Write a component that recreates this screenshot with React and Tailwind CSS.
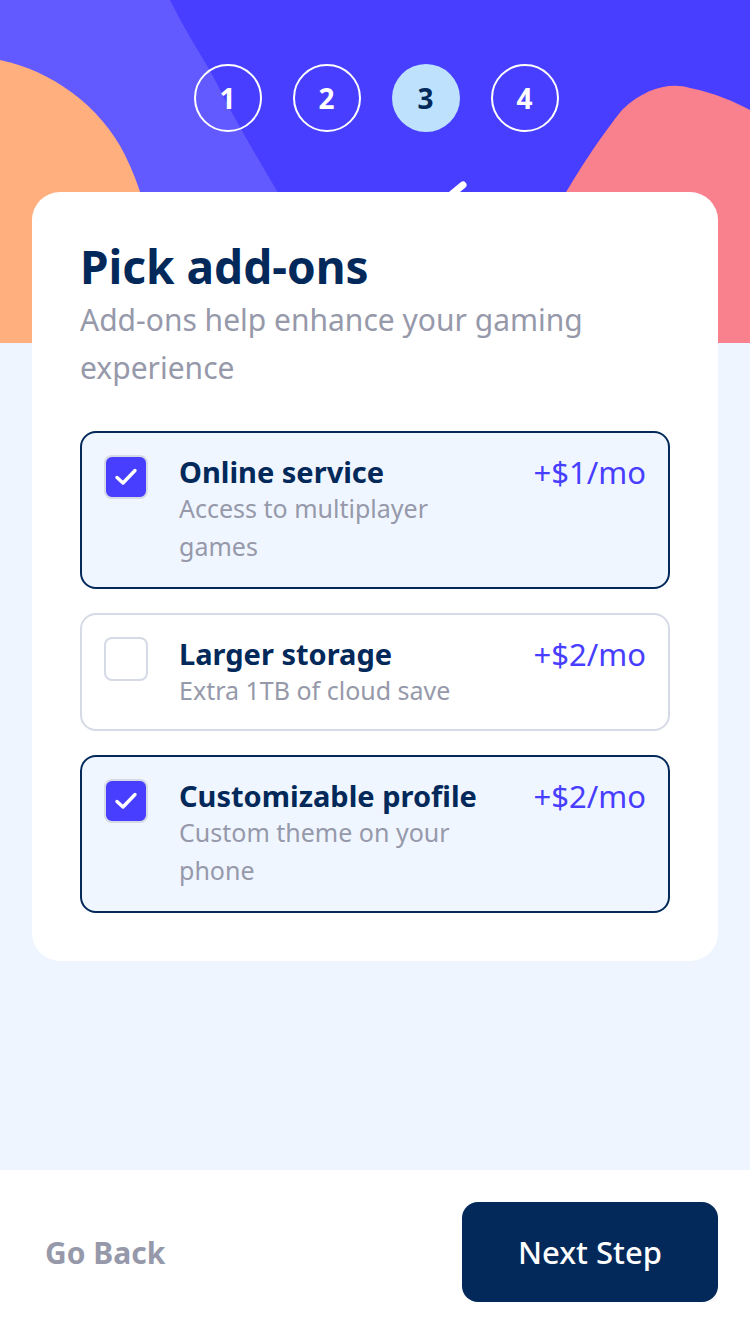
import React from "react";

const steps = [1, 2, 3, 4];

const addons = [
  { title: "Online service", desc: ["Access to multiplayer", "games"], price: "+$1/mo", checked: true },
  { title: "Larger storage", desc: ["Extra 1TB of cloud save"], price: "+$2/mo", checked: false },
  { title: "Customizable profile", desc: ["Custom theme on your", "phone"], price: "+$2/mo", checked: true },
];

function Check() {
  return (
    <svg width="24" height="20" viewBox="0 0 24 20" fill="none">
      <path d="M3 10.5 L9 16 L21 3.5" stroke="white" strokeWidth="3.4" strokeLinecap="round" strokeLinejoin="round" />
    </svg>
  );
}

function HeroBg() {
  return (
    <svg className="absolute inset-0" width="750" height="343" viewBox="0 0 750 343" preserveAspectRatio="none">
      <rect width="750" height="343" fill="#483EFF" />
      <path d="M0 0 L170 0 C190 40 205 60 215 80 C240 130 262 165 300 230 L330 343 L0 343 Z" fill="#6259FF" />
      <path d="M0 60 C50 70 100 105 125 155 C150 205 160 270 170 343 L0 343 Z" fill="#FFAF7E" />
      <path d="M540 240 C560 200 590 150 622 110 C645 88 670 82 690 88 C715 93 735 102 750 110 L750 343 L540 343 Z" fill="#F9818E" />
      <path d="M452 194 L463 185" stroke="white" strokeWidth="7" strokeLinecap="round" />
    </svg>
  );
}

export default function App() {
  return (
    <div className="w-[750px] h-[1334px] flex flex-col bg-[#EFF5FF] overflow-hidden" style={{ fontFamily: "'Noto Sans', sans-serif" }}>
      <div className="relative h-[343px] shrink-0">
        <HeroBg />
        <div className="relative flex justify-center gap-[31px] pt-[64px] pl-[2px]">
          {steps.map((s) => (
            <div
              key={s}
              className={
                s === 3
                  ? "w-[68px] h-[68px] rounded-full bg-[#BEE2FD] text-[#02295A] flex items-center justify-center text-[28px] font-bold"
                  : "w-[68px] h-[68px] rounded-full border-2 border-white text-white flex items-center justify-center text-[28px] font-bold"
              }
            >
              {s}
            </div>
          ))}
        </div>
      </div>

      <div className="relative mx-8 -mt-[151px] bg-white rounded-[28px] px-12 pt-[44px] pb-12 flex flex-col">
        <h1 className="text-[46px] leading-[60px] font-bold text-[#02295A]">Pick add-ons</h1>
        <p className="text-[30px] leading-[48px] text-[#9699AA]">
          Add-ons help enhance your gaming
          <br />
          experience
        </p>
        <div className="flex flex-col gap-6 mt-[39px]">
          {addons.map((a) => (
            <div
              key={a.title}
              className={
                a.checked
                  ? "flex items-start border-2 border-[#02295A] bg-[#F0F6FF] rounded-[16px] pl-[22px] pr-[22px] pt-[22px] pb-[22px]"
                  : "flex items-start border-2 border-[#D6D9E6] bg-white rounded-[16px] pl-[22px] pr-[22px] pt-[22px] pb-[20px]"
              }
            >
              {a.checked ? (
                <div className="w-[44px] h-[44px] rounded-[8px] bg-[#483EFF] border-2 border-[#D6D9E6] flex items-center justify-center shrink-0">
                  <Check />
                </div>
              ) : (
                <div className="w-[44px] h-[44px] rounded-[8px] bg-white border-2 border-[#D6D9E6] shrink-0" />
              )}
              <div className="flex-1 ml-[31px]">
                <div className="text-[29px] leading-[34px] font-bold text-[#02295A]">{a.title}</div>
                <div className="text-[25px] leading-[38px] text-[#9699AA]">
                  {a.desc.map((d, i) => (
                    <div key={i}>{d}</div>
                  ))}
                </div>
              </div>
              <div className="text-[31px] leading-[34px] text-[#483EFF] shrink-0">{a.price}</div>
            </div>
          ))}
        </div>
      </div>

      <div className="flex-1" />

      <div className="h-[164px] shrink-0 bg-white flex items-center justify-between pl-[45px] pr-[32px]">
        <span className="text-[30px] font-bold text-[#9699AA]">Go Back</span>
        <button className="w-[256px] h-[100px] rounded-[16px] bg-[#02295A] text-white text-[31px] font-medium">Next Step</button>
      </div>
    </div>
  );
}
